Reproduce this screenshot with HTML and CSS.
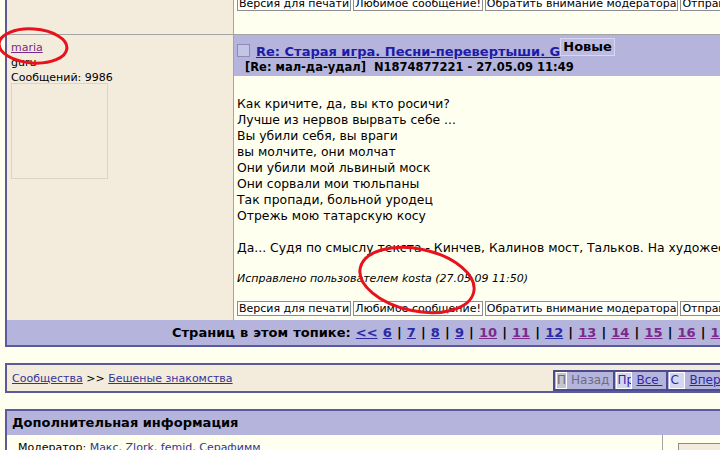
FILE: index.html
```html
<!DOCTYPE html>
<html lang="ru">
<head>
  <meta charset="UTF-8">
  <title>Старая игра. Песни-перевертыши</title>
  <link rel="stylesheet" href="styles.css">
</head>
<body>

  <div class="page">
    <div class="topic">

      <!-- хвост предыдущего сообщения -->
      <div class="row prev">
        <div class="user-col"></div>
        <div class="post-col">
          <div class="actions">
            <span class="btn">Версия для печати</span>
            <span class="btn">Любимое сообщение!</span>
            <span class="btn">Обратить внимание модератора</span>
            <span class="btn">Отправить по почте</span>
          </div>
        </div>
      </div>

      <div class="row">
        <div class="user-col">
          <a class="nick" href="#">maria</a>
          <div>guru</div>
          <div>Сообщений: 9986</div>
          <div class="avatar"></div>
        </div>
        <div class="post-col">
          <div class="post-head">
            <div class="subject">
              <span class="check"></span>
              <a class="title" href="#">Re: Старая игра. Песни-перевертыши. G</a>
              <span class="badge">Новые</span>
            </div>
            <div class="meta">[Re: мал-да-удал]&nbsp; N1874877221 - 27.05.09 11:49</div>
          </div>
          <div class="post-body">
            Как кричите, да, вы кто росичи?<br>
            Лучше из нервов вырвать себе ...<br>
            Вы убили себя, вы враги<br>
            вы молчите, они молчат<br>
            Они убили мой львиный моск<br>
            Они сорвали мои тюльпаны<br>
            Так пропади, больной уродец<br>
            Отрежь мою татарскую косу<br>
            <br>
            Да... Судя по смыслу текста - Кинчев, Калинов мост, Тальков. На художественную ценность не претендую
          </div>
          <div class="edited">Исправлено пользователем kosta (27.05.09 11:50)</div>
          <div class="actions post-actions">
            <span class="btn">Версия для печати</span>
            <span class="btn">Любимое сообщение!</span>
            <span class="btn">Обратить внимание модератора</span>
            <span class="btn">Отправить по почте</span>
          </div>
        </div>
      </div>

      <div class="pages">
        <b>Страниц в этом топике:</b>
        <a href="#">&lt;&lt;</a> <a href="#">6</a> |
        <a href="#">7</a> |
        <a href="#">8</a> |
        <a href="#">9</a> |
        <a class="seen" href="#">10</a> |
        <a class="seen" href="#">11</a> |
        <a href="#">12</a> |
        <a class="seen" href="#">13</a> |
        <a class="seen" href="#">14</a> |
        <a class="seen" href="#">15</a> |
        <a class="seen" href="#">16</a> |
        <a class="seen" href="#">17</a>
      </div>
    </div>

    <div class="crumbs">
      <div class="path">
        <a href="#">Сообщества</a> &gt;&gt; <a href="#">Бешеные знакомства</a>
      </div>
      <div class="nav">
        <span class="nav-cell"><span class="nav-box off">П</span><span class="nav-off">Назад</span></span>
        <span class="nav-cell"><span class="nav-box">Пр</span><a href="#">Все&nbsp;</a></span>
        <span class="nav-cell"><span class="nav-box">С</span><a href="#">Вперед</a></span>
      </div>
    </div>

    <div class="info">
      <div class="info-head">Дополнительная информация</div>
      <div class="info-body">
        <div class="mods">Модератор: <a href="#">Макс</a>, <a href="#">Zlork</a>, <a href="#">femid</a>, <a href="#">Серафимм</a></div>
        <div class="info-side"><span class="side-btn"></span></div>
      </div>
    </div>
  </div>

  <!-- пометки поверх скриншота -->
  <svg class="marks" width="720" height="450" viewBox="0 0 720 450">
    <ellipse cx="33" cy="46" rx="34" ry="17" transform="rotate(4 33 46)" />
    <ellipse cx="417" cy="280" rx="58" ry="31" transform="rotate(12 417 280)" />
  </svg>

</body>
</html>
```

FILE: styles.css
```css
html, body {
  overflow: hidden;
}

body {
  margin: 0;
  background-color: #fffff0;
  font-family: "DejaVu Sans", Verdana, sans-serif;
  font-size: 11px;
  color: #000;
}

a {
  color: #2a2aa6;
}

.page {
  width: 1000px;
  margin: -20px 0 0 5px;
}

/* топик */
.topic {
  border-left: 2px solid #5b5b9b;
  border-bottom: 2px solid #5b5b9b;
}

.row {
  display: flex;
}

.row.prev {
  height: 54px;
  border-bottom: 1px solid #a4a4a4;
}

.user-col {
  flex: none;
  width: 218px;
  padding: 5px 4px;
  background-color: #f3ebdc;
  line-height: 15px;
}

.nick {
  color: #7a2a8a;
}

.avatar {
  width: 95px;
  height: 94px;
  margin-top: -2px;
  border: 1px solid #dcd4c4;
}

.post-col {
  flex: 1;
  border-left: 1px solid #a4a4a4;
  background-color: #fffff0;
}

.prev .post-col {
  padding-top: 16px;
}

.post-head {
  background-color: #b4b4dc;
  padding: 3px 0 2px;
}

.subject {
  display: flex;
  align-items: flex-start;
  height: 22px;
}

.check {
  width: 11px;
  height: 11px;
  margin: 6px 6px 0 3px;
  border: 1px solid #8c8cb4;
  background-color: #c4c4e6;
}

.title {
  margin-top: 6px;
  font-size: 13px;
  font-weight: bold;
  line-height: 16px;
  color: #1c1ca8;
}

.badge {
  padding: 0 2px;
  border: 1px solid #d6d6ee;
  background-color: #bcbce2;
  font-size: 13px;
  font-weight: bold;
  line-height: 16px;
}

.meta {
  margin-left: 11px;
  font-size: 11.5px;
  font-weight: bold;
  line-height: 14px;
}

.post-body {
  padding: 20px 3px 0;
  font-size: 12.4px;
  line-height: 16px;
  white-space: nowrap;
}

.edited {
  margin: 16px 0 0 3px;
  font-style: italic;
  line-height: 14px;
}

.actions {
  display: flex;
  gap: 2px;
  padding: 0 0 4px 3px;
}

.post-actions {
  margin-top: 15px;
}

.btn {
  flex: none;
  height: 13px;
  padding: 0 1px;
  border: 1px solid #8c8c8c;
  background-color: #fff;
  line-height: 13px;
  white-space: nowrap;
}

.pages {
  height: 25px;
  padding-left: 165px;
  background-color: #b4b4dc;
  font-size: 13px;
  font-weight: bold;
  line-height: 25px;
  white-space: nowrap;
  word-spacing: 0.6px;
}

.pages a {
  color: #2a2aa6;
}

.pages a.seen {
  color: #7a2a8a;
}

/* хлебные крошки */
.crumbs {
  display: flex;
  align-items: center;
  height: 26px;
  margin-top: 16px;
  border: 2px solid #5b5b9b;
  background-color: #f3ebdc;
}

.path {
  width: 541px;
  padding-left: 5px;
}

.path a {
  color: #333399;
}

.nav {
  display: flex;
  margin-top: 4px;
  border: 2px solid #4c4c8c;
  background-color: #b4b4dc;
  font-size: 12px;
}

.nav-cell {
  display: flex;
  align-items: center;
  height: 17px;
  padding: 0 4px 0 1px;
  border-left: 2px solid #4c4c8c;
}

.nav-cell:first-child {
  border-left: 0;
}

.nav-box {
  width: 14px;
  height: 15px;
  margin-right: 4px;
  overflow: hidden;
  border: 1px solid #fff;
  background-color: #d6d6f0;
  color: #2a2aa6;
  line-height: 15px;
}

.nav-box.off {
  width: 9px;
  background-color: #c4c4cc;
  color: #6c6c7c;
}

.nav-off {
  color: #6c6c84;
}

/* доп. информация */
.info {
  margin-top: 16px;
  border-top: 2px solid #5b5b9b;
  border-left: 2px solid #5b5b9b;
}

.info-head {
  height: 24px;
  padding-left: 5px;
  background-color: #b4b4dc;
  font-size: 13px;
  font-weight: bold;
  line-height: 24px;
}

.info-body {
  display: flex;
}

.mods {
  width: 644px;
  padding: 6px 0 0 11px;
}

.mods a {
  color: #333399;
}

.info-side {
  flex: 1;
  height: 40px;
  border-left: 1px solid #a4a4a4;
}

.side-btn {
  display: block;
  width: 80px;
  height: 20px;
  margin: 8px 0 0 15px;
  border: 1px solid #8c8c8c;
  background-color: #f3ebdc;
}

/* красные овалы */
.marks {
  position: absolute;
  left: 0;
  top: 0;
  fill: none;
  stroke: #e8121c;
  stroke-width: 3;
}
```
